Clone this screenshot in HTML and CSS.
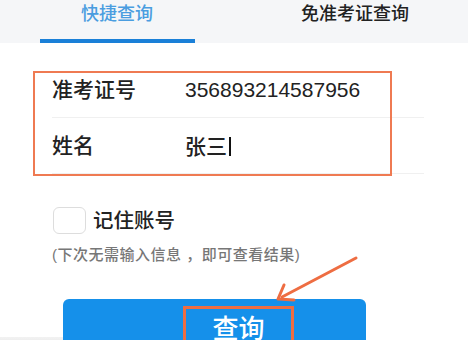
FILE: index.html
```html
<!DOCTYPE html>
<html lang="zh-CN">

<head>
    <meta charset="utf-8">
    <meta name="viewport" content="width=device-width, initial-scale=1.0">
    <title>成绩查询</title>
    <link rel="stylesheet" href="styles.css">
</head>

<body>

<div class="page">
    <!-- 顶部切换 -->
    <div class="tabs">
        <div class="tab active">
            <span>快捷查询</span>
            <div class="bar"></div>
        </div>
        <div class="tab">
            <span>免准考证查询</span>
        </div>
    </div>

    <!-- 查询表单 -->
    <div class="fields">
        <div class="row">
            <div class="label">准考证号</div>
            <div class="value">356893214587956</div>
        </div>
        <div class="row">
            <div class="label">姓名</div>
            <div class="value">张三<span class="cursor"></span></div>
        </div>
    </div>

    <div class="remember">
        <div class="checkbox"></div>
        <div class="remember-text">记住账号</div>
    </div>
    <div class="hint">(下次无需输入信息 ，即可查看结果)</div>

    <div class="btn-row">
        <div class="shade"></div>
        <div class="btn">
            <span class="btn-text">查询</span>
        </div>
    </div>

    <!-- 标注 -->
    <div class="mark-form"></div>
    <svg class="arrow" width="90" height="50" viewBox="0 0 90 50">
        <line x1="86" y1="3" x2="12" y2="42" stroke="#ee6d42" stroke-width="3" stroke-linecap="round"/>
        <polyline points="14,30 8,44 24,45" fill="none" stroke="#ee6d42" stroke-width="3" stroke-linecap="round" stroke-linejoin="round"/>
    </svg>
</div>

</body>

</html>
```

FILE: styles.css
```css
/* 全局样式 */
*
{
    margin: 0;
    padding: 0;
    box-sizing: border-box;
}

body
{
    background-color: #ffffff;
    font-family: "Liberation Sans", "Noto Sans CJK SC", sans-serif;
    font-weight: 500;
    color: #222222;
}

.page
{
    position: relative;
    width: 468px;
    height: 340px;
    overflow: hidden;
}

/* 顶部切换 */
.tabs
{
    display: flex;
    height: 43px;
    background-color: #f5f6f8;
}

.tab
{
    flex: 1;
    display: flex;
    flex-direction: column;
    align-items: center;
    font-size: 18px;
    line-height: 28px;
    color: #222222;
}

.tab.active
{
    color: #4a9de0;
}

.tab .bar
{
    width: 155px;
    height: 4px;
    margin-top: 11px;
    background-color: #1a80d8;
}

.tab:last-child span
{
    margin-left: 8px;
}

/* 表单 */
.fields
{
    width: 372px;
    margin-top: 19px;
    margin-left: 52px;
}

.row
{
    display: flex;
    align-items: center;
    height: 56px;
    border-bottom: 1px solid #f0f0f0;
    font-size: 21px;
    line-height: 28px;
}

.label
{
    width: 133px;
    color: #222222;
}

.value
{
    display: flex;
    align-items: center;
    font-size: 21px;
    color: #222222;
}

.row:last-child .value
{
    margin-top: 2px;
}

.cursor
{
    width: 2px;
    height: 19px;
    margin-left: 2px;
    background-color: #111111;
}

/* 记住账号 */
.remember
{
    display: flex;
    align-items: center;
    height: 27px;
    margin-top: 33px;
    margin-left: 53px;
}

.checkbox
{
    width: 33px;
    height: 27px;
    border: 1.5px solid #dddddd;
    border-radius: 6px;
}

.remember-text
{
    margin-left: 7px;
    font-size: 20.5px;
    line-height: 27px;
    color: #222222;
}

.hint
{
    margin-top: 11px;
    margin-left: 52px;
    font-size: 15px;
    line-height: 20px;
    letter-spacing: 0.5px;
    color: #777777;
}

/* 查询按钮 */
.btn-row
{
    display: flex;
    margin-top: 34px;
}

.shade
{
    width: 63px;
    height: 12px;
    align-self: flex-end;
    margin-top: 29px;
    background: linear-gradient(#f2f2f2, #e4e4e4);
}

.btn
{
    width: 303px;
    height: 50px;
    padding-top: 7px;
    padding-left: 120px;
    border-radius: 6px 6px 0 0;
    background-color: #1590ea;
}

.btn-text
{
    display: inline-block;
    width: 111px;
    height: 40px;
    border: 3px solid #ee6d42;
    text-align: center;
    font-size: 26px;
    line-height: 40px;
    color: #ffffff;
}

/* 标注 */
.mark-form
{
    position: absolute;
    left: 33px;
    top: 71px;
    width: 359px;
    height: 105px;
    border: 2px solid #ef7a52;
}

.arrow
{
    position: absolute;
    left: 270px;
    top: 255px;
}
```
